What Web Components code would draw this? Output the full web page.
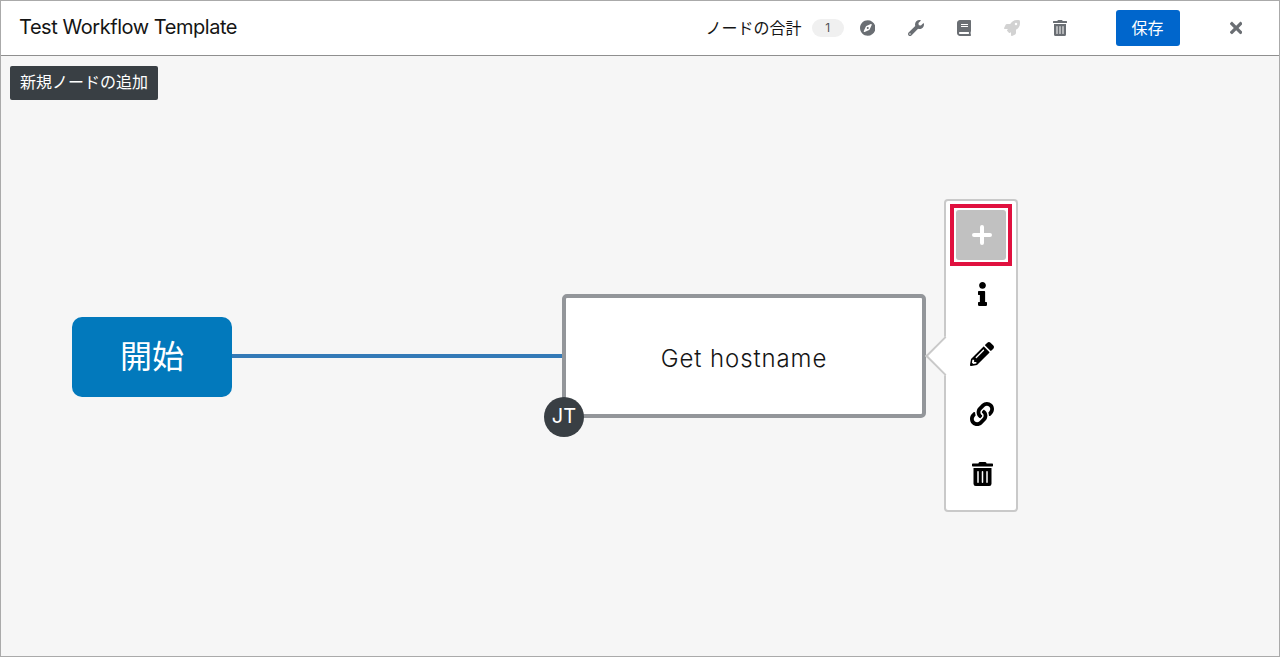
<!DOCTYPE html>
<html lang="ja">
<head>
<meta charset="utf-8">
<title>Test Workflow Template</title>
<style>
  html, body { margin: 0; padding: 0; background: #f6f6f6; }
</style>
</head>
<body>
<workflow-app>
  <workflow-header slot="header" title="Test Workflow Template" count="1" save="保存"></workflow-header>
  <workflow-canvas slot="canvas">
    <add-hint>新規ノードの追加</add-hint>
    <start-node>開始</start-node>
    <link-line></link-line>
    <job-node initials="JT">Get hostname</job-node>
    <node-menu>
      <menu-action icon="plus" focused></menu-action>
      <menu-action icon="info"></menu-action>
      <menu-action icon="pencil"></menu-action>
      <menu-action icon="link"></menu-action>
      <menu-action icon="trash"></menu-action>
    </node-menu>
  </workflow-canvas>
</workflow-app>

<script>
const CJK = '"Noto Sans CJK JP", "Noto Sans", sans-serif';
const LATIN = 'Inter, "Noto Sans CJK JP", sans-serif';

// icon shapes, viewBox width + path
const ICONS = {
  compass: [496, "M225.38 233.37c-12.5 12.5-12.5 32.76 0 45.25 12.49 12.5 32.76 12.5 45.25 0 12.5-12.5 12.5-32.76 0-45.25-12.5-12.49-32.76-12.49-45.25 0zM248 8C111.03 8 0 119.03 0 256s111.03 248 248 248 248-111.03 248-248S384.97 8 248 8zm126.14 148.05L308.17 300.4a31.938 31.938 0 0 1-15.77 15.77l-144.34 65.97c-16.65 7.61-33.81-9.55-26.2-26.2l65.98-144.35a31.938 31.938 0 0 1 15.77-15.77l144.34-65.97c16.65-7.6 33.8 9.55 26.19 26.2z"],
  wrench: [512, "M507.73 109.1c-2.24-9.03-13.54-12.09-20.12-5.51l-74.36 74.36-67.88-11.31-11.31-67.88 74.36-74.36c6.62-6.62 3.43-17.9-5.66-20.16-47.38-11.74-99.55.91-136.58 37.93-39.64 39.64-50.55 97.1-34.05 147.2L18.74 402.76c-24.99 24.99-24.99 65.51 0 90.5 24.99 24.99 65.51 24.99 90.5 0l213.21-213.21c50.12 16.71 107.47 5.68 147.37-34.22 37.07-37.07 49.7-89.32 37.91-136.73zM64 472c-13.25 0-24-10.75-24-24 0-13.26 10.75-24 24-24s24 10.74 24 24c0 13.25-10.75 24-24 24z"],
  book: [448, "M448 360V24c0-13.3-10.7-24-24-24H96C43 0 0 43 0 96v320c0 53 43 96 96 96h328c13.3 0 24-10.7 24-24v-16c0-7.5-3.5-14.3-8.9-18.7-4.2-15.4-4.2-59.3 0-74.7 5.4-4.3 8.9-11.1 8.9-18.6zM128 134c0-3.3 2.7-6 6-6h212c3.3 0 6 2.7 6 6v20c0 3.3-2.7 6-6 6H134c-3.3 0-6-2.7-6-6v-20zm0 64c0-3.3 2.7-6 6-6h212c3.3 0 6 2.7 6 6v20c0 3.3-2.7 6-6 6H134c-3.3 0-6-2.7-6-6v-20zm253.4 250H96c-17.7 0-32-14.3-32-32 0-17.6 14.4-32 32-32h285.4c-1.9 17.1-1.9 46.9 0 64z"],
  rocket: [512, "M505.12 19.09c-1.19-5.53-6.66-11-12.21-12.19C460.72 0 435.51 0 410.41 0 307.18 0 245.27 55.2 199.05 128H94.84c-16.35.02-35.56 11.88-42.89 26.48L2.52 253.3A28.4 28.4 0 0 0 0 264a24 24 0 0 0 24 24h103.81l-22.47 22.47c-11.37 11.36-13 32.26 0 45.25l50.9 50.91c11.16 11.18 32.16 13.15 45.28 0L224 384.16V488a24 24 0 0 0 24 24 28.56 28.56 0 0 0 10.71-2.52l98.73-49.39c14.63-7.3 26.5-26.5 26.5-42.86V312.8C456.54 266.48 512 204.39 512 101.7c.08-25.2.08-50.4-6.88-82.61zM384.04 168a40 40 0 1 1 40.01-40 40.02 40.02 0 0 1-40.01 40z"],
  trash: [448, "M32 464a48 48 0 0 0 48 48h288a48 48 0 0 0 48-48V128H32zm272-256a16 16 0 0 1 32 0v224a16 16 0 0 1-32 0zm-96 0a16 16 0 0 1 32 0v224a16 16 0 0 1-32 0zm-96 0a16 16 0 0 1 32 0v224a16 16 0 0 1-32 0zM432 32H312l-9.4-18.7A24 24 0 0 0 281.1 0H166.8a23.72 23.72 0 0 0-21.4 13.3L136 32H16A16 16 0 0 0 0 48v32a16 16 0 0 0 16 16h416a16 16 0 0 0 16-16V48a16 16 0 0 0-16-16z"],
  times: [352, "M242.72 256l100.07-100.07c12.28-12.28 12.28-32.19 0-44.48l-22.24-22.24c-12.28-12.28-32.19-12.28-44.48 0L176 189.28 75.93 89.21c-12.28-12.28-32.19-12.28-44.48 0L9.21 111.45c-12.28 12.28-12.28 32.19 0 44.48L109.28 256 9.21 356.07c-12.28 12.28-12.28 32.19 0 44.48l22.24 22.24c12.28 12.28 32.2 12.28 44.48 0L176 322.72l100.07 100.07c12.28 12.28 32.2 12.28 44.48 0l22.24-22.24c12.28-12.28 12.28-32.19 0-44.48L242.72 256z"],
  info: [192, "M20 424.229h20V279.771H20c-11.046 0-20-8.954-20-20V212c0-11.046 8.954-20 20-20h112c11.046 0 20 8.954 20 20v212.229h20c11.046 0 20 8.954 20 20V492c0 11.046-8.954 20-20 20H20c-11.046 0-20-8.954-20-20v-47.771c0-11.046 8.954-20 20-20zM96 0C56.235 0 24 32.235 24 72s32.235 72 72 72 72-32.235 72-72S135.764 0 96 0z"],
  pencil: [512, "M497.9 142.1l-46.1 46.1c-4.7 4.7-12.3 4.7-17 0l-111-111c-4.7-4.7-4.7-12.3 0-17l46.1-46.1c18.7-18.7 49.1-18.7 67.9 0l60.1 60.1c18.8 18.7 18.8 49.1 0 67.9zM284.2 99.8L21.6 362.4.4 483.9c-2.9 16.4 11.4 30.6 27.8 27.8l121.5-21.3 262.6-262.6c4.7-4.7 4.7-12.3 0-17l-111-111c-4.8-4.7-12.4-4.7-17.1 0zM124.1 339.9c-5.5-5.5-5.5-14.3 0-19.8l154-154c5.5-5.5 14.3-5.5 19.8 0s5.5 14.3 0 19.8l-154 154c-5.5 5.5-14.3 5.5-19.8 0zM88 424h48v36.3l-64.5 11.3-31.1-31.1L51.7 376H88v48z"],
  link: [512, "M326.612 185.391c59.747 59.809 58.927 155.698.36 214.59-.11.12-.24.25-.36.37l-67.2 67.2c-59.27 59.27-155.699 59.262-214.96 0-59.27-59.26-59.27-155.7 0-214.96l37.106-37.106c9.84-9.84 26.786-3.3 27.294 10.606.648 17.722 3.826 35.527 9.69 52.721 1.986 5.822.567 12.262-3.783 16.612l-13.087 13.087c-28.026 28.026-28.905 73.66-1.155 101.96 28.024 28.579 74.086 28.749 102.325.51l67.2-67.19c28.191-28.191 28.073-73.757 0-101.83-3.701-3.694-7.429-6.564-10.341-8.569a16.037 16.037 0 0 1-6.947-12.606c-.396-10.567 3.348-21.456 11.698-29.806l21.054-21.055c5.521-5.521 14.182-6.199 20.584-1.731a152.482 152.482 0 0 1 20.522 17.197zM467.547 44.449c-59.261-59.262-155.69-59.27-214.96 0l-67.2 67.2c-.12.12-.25.25-.36.37-58.566 58.892-59.387 154.781.36 214.59a152.454 152.454 0 0 0 20.521 17.196c6.402 4.468 15.064 3.789 20.584-1.731l21.054-21.055c8.35-8.35 12.094-19.239 11.698-29.806a16.037 16.037 0 0 0-6.947-12.606c-2.912-2.005-6.64-4.875-10.341-8.569-28.073-28.073-28.191-73.639 0-101.83l67.2-67.19c28.239-28.239 74.3-28.069 102.325.51 27.75 28.3 26.872 73.934-1.155 101.96l-13.087 13.087c-4.35 4.35-5.769 10.79-3.783 16.612 5.864 17.194 9.042 34.999 9.69 52.721.509 13.906 17.454 20.446 27.294 10.606l37.106-37.106c59.271-59.259 59.271-155.699.001-214.959z"]
};

function iconSvg(name, size, color) {
  const [w, d] = ICONS[name];
  const width = (size * w) / 512;
  return `<svg width="${width}" height="${size}" viewBox="0 0 ${w} 512" fill="${color}" style="display:block"><path d="${d}"/></svg>`;
}

// small base class so every element just gives its html
class ShadowEl extends HTMLElement {
  constructor() {
    super();
    this.attachShadow({ mode: "open" });
  }
  connectedCallback() {
    this.shadowRoot.innerHTML = this.render();
  }
}

class WorkflowApp extends ShadowEl {
  render() {
    return `<style>
      :host { display: flex; flex-direction: column; box-sizing: border-box; width: 1280px; height: 657px; border: 1px solid #aaa; background: #f6f6f6; overflow: hidden; }
    </style>
    <slot name="header"></slot>
    <slot name="canvas"></slot>`;
  }
}

class WorkflowHeader extends ShadowEl {
  render() {
    const tools = [["compass", "#6a6e73"], ["wrench", "#6a6e73"], ["book", "#6a6e73"], ["rocket", "#d2d2d2"], ["trash", "#6a6e73"]];
    return `<style>
      :host { display: flex; align-items: center; box-sizing: border-box; height: 55px; flex: none; background: #fff; border-bottom: 1px solid #8f8f8f; padding-left: 18px; color: #151515; }
      h1 { margin: 0 0 2px; flex: 1; font: 400 20px/30px ${LATIN}; letter-spacing: -.45px; }
      .total { font: 400 16px/20px ${CJK}; margin: 0 10px 2px 0; }
      .count { width: 32px; height: 18px; border-radius: 9px; background: #f0f0f0; font: 400 12px/18px ${LATIN}; text-align: center; color: #4f5255; }
      .tools { display: flex; margin-right: 32px; }
      .tool { width: 48px; height: 36px; display: flex; align-items: center; justify-content: center; }
      button { flex: none; width: 64px; height: 36px; padding: 0 0 2px; border: 0; border-radius: 3px; background: #06c; color: #fff; font: 400 16px/24px ${CJK}; }
      .close { flex: none; margin: 0 37px 0 50px; }
    </style>
    <h1>${this.getAttribute("title")}</h1>
    <span class="total">ノードの合計</span>
    <span class="count">${this.getAttribute("count")}</span>
    <div class="tools">
      ${tools.map(([n, c]) => `<span class="tool">${iconSvg(n, 16, c)}</span>`).join("")}
    </div>
    <button>${this.getAttribute("save")}</button>
    <span class="close">${iconSvg("times", 18, "#6a6e73")}</span>`;
  }
}

// free canvas, the graph items keep their own place on it
class WorkflowCanvas extends ShadowEl {
  render() {
    return `<style>
      :host { display: block; position: relative; flex: 1; background: #f6f6f6; }
    </style>
    <slot></slot>`;
  }
}

class AddHint extends ShadowEl {
  render() {
    return `<style>
      :host { position: absolute; left: 9px; top: 10px; box-sizing: border-box; height: 34px; padding: 0 10px 4px; border-radius: 2px; background: #393f44; color: #fff; font: 400 16px/30px ${CJK}; white-space: nowrap; }
    </style><slot></slot>`;
  }
}

class StartNode extends ShadowEl {
  render() {
    return `<style>
      :host { position: absolute; left: 71px; top: 261px; box-sizing: border-box; width: 160px; height: 80px; padding-bottom: 6px; display: flex; align-items: center; justify-content: center; border-radius: 10px; background: #0279bc; color: #fff; font: 400 32px/40px ${CJK}; }
    </style><slot></slot>`;
  }
}

class LinkLine extends ShadowEl {
  render() {
    return `<style>
      :host { position: absolute; left: 231px; top: 298px; width: 331px; height: 4px; background: #337ab7; }
    </style>`;
  }
}

class JobNode extends ShadowEl {
  render() {
    return `<style>
      :host { position: absolute; left: 561px; top: 238px; box-sizing: border-box; width: 364px; height: 124px; display: flex; align-items: center; justify-content: center; border: 4px solid #93969a; border-radius: 5px; background: #fff; color: #151515; font: 300 24px/32px ${LATIN}; }
      .label { position: relative; top: 3px; letter-spacing: .9px; }
      .badge { position: absolute; left: -22px; top: 99px; width: 40px; height: 40px; border-radius: 50%; background: #393f44; color: #fff; font: 400 20px/38px ${LATIN}; text-align: center; }
    </style>
    <span class="label"><slot></slot></span>
    <span class="badge">${this.getAttribute("initials")}</span>`;
  }
}

class NodeMenu extends ShadowEl {
  render() {
    return `<style>
      :host { position: absolute; left: 943px; top: 143px; box-sizing: border-box; width: 74px; height: 313px; display: flex; flex-direction: column; padding: 4px 0 5px; border: 2px solid #c9c9c9; border-radius: 4px; background: #fff; }
      .arrow { position: absolute; left: -15px; top: 141px; width: 28px; height: 28px; box-sizing: border-box; background: #fff; border-left: 2px solid #c9c9c9; border-bottom: 2px solid #c9c9c9; transform: rotate(45deg); }
      .items { position: relative; display: flex; flex-direction: column; }
    </style>
    <div class="arrow"></div>
    <div class="items"><slot></slot></div>`;
  }
}

class MenuAction extends ShadowEl {
  render() {
    const name = this.getAttribute("icon");
    if (this.hasAttribute("focused")) {
      return `<style>
        :host { display: flex; height: 60px; align-items: center; justify-content: center; }
        .ring { flex: none; box-sizing: border-box; width: 62px; height: 62px; padding: 2px; border: 4px solid #e0113f; background: #fff; }
        .add { height: 100%; padding-left: 1px; box-sizing: border-box; border-radius: 3px; background: #c1c1c1; display: flex; align-items: center; justify-content: center; }
      </style>
      <div class="ring"><div class="add">
        <svg width="20" height="20" viewBox="0 0 20 20" style="display:block"><path d="M10 2v16M2 10h16" stroke="#fff" stroke-width="4" stroke-linecap="round" fill="none"/></svg>
      </div></div>`;
    }
    return `<style>
      :host { display: flex; box-sizing: border-box; height: 60px; align-items: center; justify-content: center; padding: 0 0 2px 2px; }
    </style>${iconSvg(name, 24, "#000")}`;
  }
}

customElements.define("workflow-app", WorkflowApp);
customElements.define("workflow-header", WorkflowHeader);
customElements.define("workflow-canvas", WorkflowCanvas);
customElements.define("add-hint", AddHint);
customElements.define("start-node", StartNode);
customElements.define("link-line", LinkLine);
customElements.define("job-node", JobNode);
customElements.define("node-menu", NodeMenu);
customElements.define("menu-action", MenuAction);
</script>
</body>
</html>
